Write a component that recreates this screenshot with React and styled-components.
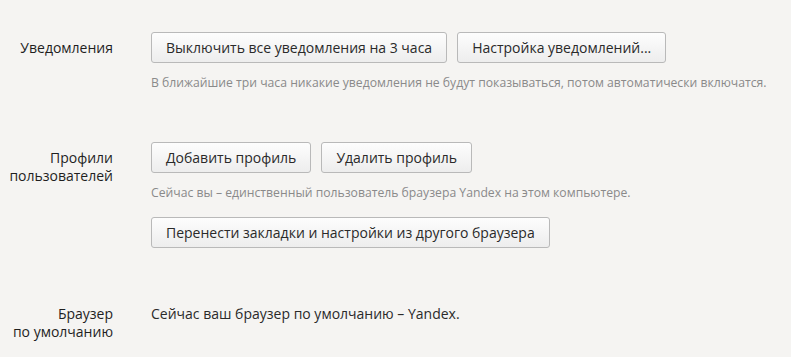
import React from "react";
import styled, { createGlobalStyle } from "styled-components";

const GlobalStyle = createGlobalStyle`
  html, body {
    margin: 0;
    padding: 0;
    background: #f5f4f2;
  }
  body {
    font-family: "Open Sans", "Noto Sans", sans-serif;
    color: #262626;
  }
`;

const App = () => {
  return (
    <Page>
      <GlobalStyle />
      <Section $gap={50}>
        <Label>Уведомления</Label>
        <Content>
          <ButtonRow>
            <Button>Выключить все уведомления на 3 часа</Button>
            <Button>Настройка уведомлений...</Button>
          </ButtonRow>
          <Hint>
            В ближайшие три часа никакие уведомления не будут показываться, потом
            автоматически включатся.
          </Hint>
        </Content>
      </Section>

      <Section $gap={57}>
        <Label>
          Профили
          <br />
          пользователей
        </Label>
        <Content>
          <ButtonRow>
            <Button>Добавить профиль</Button>
            <Button>Удалить профиль</Button>
          </ButtonRow>
          <Hint>
            Сейчас вы – единственный пользователь браузера Yandex на этом
            компьютере.
          </Hint>
          <ButtonRow $top={15}>
            <Button>Перенести закладки и настройки из другого браузера</Button>
          </ButtonRow>
        </Content>
      </Section>

      <Section $gap={0}>
        <Label $top={0}>
          Браузер
          <br />
          по умолчанию
        </Label>
        <Content>
          <Text>Сейчас ваш браузер по умолчанию – Yandex.</Text>
        </Content>
      </Section>
    </Page>
  );
};
export default App;

const Page = styled.div`
  width: 791px;
  height: 357px;
  box-sizing: border-box;
  padding-top: 32px;
  overflow: hidden;
`;

const Section = styled.div`
  display: grid;
  grid-template-columns: 113px 1fr;
  column-gap: 38px;
  margin-bottom: ${(p) => p.$gap}px;
`;

const Label = styled.div`
  text-align: right;
  font-size: 14px;
  line-height: 18px;
  color: #1f1f1f;
  padding-top: ${(p) => (p.$top === undefined ? 7 : p.$top)}px;
`;

const Content = styled.div`
  display: flex;
  flex-direction: column;
  align-items: flex-start;
`;

const ButtonRow = styled.div`
  display: flex;
  gap: 10px;
  margin-top: ${(p) => p.$top || 0}px;
`;

const Button = styled.button`
  height: 31px;
  padding: 0 14px;
  border: 1px solid #b9b9b9;
  border-radius: 3px;
  background: linear-gradient(#fdfdfd, #ededed);
  font-family: "Open Sans", "Noto Sans", sans-serif;
  font-size: 14px;
  color: #2a2a2a;
  cursor: pointer;
  white-space: nowrap;
`;

const Hint = styled.div`
  margin-top: 11px;
  font-size: 12.2px;
  line-height: 18px;
  color: #8a8a8a;
`;

const Text = styled.div`
  font-size: 14px;
  line-height: 18px;
  color: #2a2a2a;
`;
